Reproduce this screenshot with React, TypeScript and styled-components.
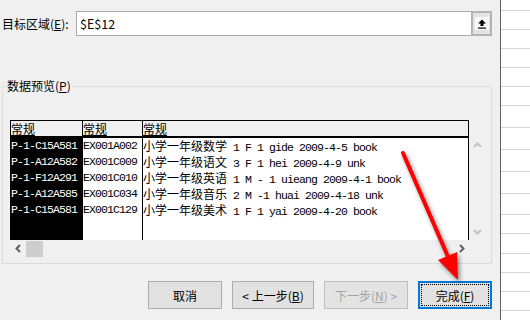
import React from 'react'
import styled, { createGlobalStyle } from 'styled-components'

const GlobalStyle = createGlobalStyle`
    html, body {
        margin: 0;
        padding: 0;
    }
    body {
        width: 530px;
        height: 320px;
        overflow: hidden;
        background: #f0f0f0;
        color: #000;
        font-family: "Noto Sans CJK SC", "Noto Sans", sans-serif;
        font-size: 12px;
    }
`

const Screen = styled.div`
    position: relative;
    display: flex;
    width: 530px;
    height: 320px;
    overflow: hidden;
`

const Dialog = styled.div`
    width: 501px;
    box-sizing: border-box;
    padding: 11px 8px 0 2px;
    display: flex;
    flex-direction: column;
    border-right: 1px solid #646464;
    background: #f0f0f0;
`

const InputRow = styled.div`
    display: flex;
    align-items: center;
    height: 25px;
`

const FieldLabel = styled.label`
    width: 74px;
    flex-shrink: 0;
    line-height: 25px;
    white-space: nowrap;
`

const Mn = styled.span`
    text-decoration: underline;
    text-underline-offset: 1px;
`

const FieldBox = styled.div`
    flex: 1;
    display: flex;
    height: 25px;
    box-sizing: border-box;
    border: 1px solid #a9a9a9;
    border-right: none;
    background: #fff;
`

const FieldValue = styled.div`
    flex: 1;
    padding-left: 3px;
    line-height: 23px;
    font-size: 12.5px;
`

const RefButton = styled.div`
    width: 21px;
    box-sizing: border-box;
    margin-top: -1px;
    height: 25px;
    border: 2px solid #b3b3b3;
    background: #e3e3e3;
    display: flex;
    align-items: center;
    justify-content: center;
`

const RefTile = styled.div`
    width: 14px;
    height: 13px;
    background: #fcfcfc;
    display: flex;
    align-items: center;
    justify-content: center;
`

const Group = styled.fieldset`
    margin: 43px 0 0 0;
    padding: 27px 5px 6px 7px;
    border: 1px solid #dcdcdc;
    min-width: 0;
`

const GroupLabel = styled.legend`
    padding: 0 1px;
    margin-left: -4px;
    line-height: 14px;
    font-size: 12px;
`

const Preview = styled.div`
    display: grid;
    grid-template-columns: 459px 17px;
    grid-template-rows: 120px 17px;
`

const Table = styled.div`
    display: flex;
    border-top: 1px solid #000;
    border-left: 1px solid #000;
    background: #fff;
    overflow: hidden;
`

const Column = styled.div<{ $w: number; $selected?: boolean }>`
    width: ${p => p.$w}px;
    flex-shrink: 0;
    box-sizing: border-box;
    display: flex;
    flex-direction: column;
    border-right: 1px solid #000;
    background: ${p => (p.$selected ? '#000' : '#fff')};
    color: ${p => (p.$selected ? '#fff' : '#000')};
    overflow: hidden;
`

const HeadCell = styled.div`
    height: 17px;
    box-sizing: border-box;
    border-bottom: 2px solid #000;
    background: #f0f0f0;
    color: #000;
    font-size: 12px;
    line-height: 15px;
    white-space: nowrap;
    text-decoration: underline;
    text-underline-offset: 1px;
`

const DataCell = styled.div`
    height: 16px;
    line-height: 16px;
    font-family: "Liberation Mono", monospace;
    font-size: 11.5px;
    letter-spacing: -0.9px;
    white-space: pre;
`

const Han = styled.span`
    font-family: "Noto Sans CJK SC", sans-serif;
    font-size: 12px;
    letter-spacing: 0;
`

const VScroll = styled.div`
    display: flex;
    flex-direction: column;
    justify-content: space-between;
    padding-top: 17px;
`

const HScroll = styled.div`
    display: flex;
    align-items: stretch;
    background: #f0f0f0;
`

const ScrollArrow = styled.div`
    width: 16px;
    height: 17px;
    display: flex;
    align-items: center;
    justify-content: center;
`

const Thumb = styled.div`
    width: 17px;
    margin-top: 1px;
    background: #cdcdcd;
`

const Track = styled.div`
    flex: 1;
`

const ButtonRow = styled.div`
    display: flex;
    justify-content: flex-end;
    gap: 10px;
    margin-top: 17px;
`

const Btn = styled.button<{ $w: number; $primary?: boolean }>`
    width: ${p => p.$w}px;
    height: 28px;
    box-sizing: border-box;
    padding: ${p => (p.$primary ? '1px' : '0')};
    margin: 0;
    display: flex;
    align-items: stretch;
    justify-content: center;
    background: #e1e1e1;
    border: ${p => (p.$primary ? '2px solid #0078d7' : '1px solid #adadad')};
    color: #000;
    font-family: "Noto Sans CJK SC", "Noto Sans", sans-serif;
    font-size: 12px;

    &:disabled {
        background: #e3e3e3;
        border-color: #bfbfbf;
        color: #a3a3a3;
    }
`

const BtnFace = styled.span<{ $focus?: boolean }>`
    flex: 1;
    display: flex;
    align-items: center;
    justify-content: center;
    border: 1px dotted ${p => (p.$focus ? '#000' : 'transparent')};
    white-space: pre;
`

const Sheet = styled.div`
    flex: 1;
    display: flex;
    flex-direction: column;
    background: #fff;
`

const SheetRow = styled.div<{ $h: number }>`
    height: ${p => p.$h}px;
    flex-shrink: 0;
    box-sizing: border-box;
    border-bottom: 1px solid #d4d4d4;
`

const ArrowLayer = styled.svg`
    position: absolute;
    left: 0;
    top: 0;
    pointer-events: none;
    filter: drop-shadow(2px 3px 2px rgba(0, 0, 0, 0.45));
`

const rows = [
    ['P-1-C15A581', 'EX001A002', '小学一年级数学 1 F 1 gide 2009-4-5 book'],
    ['P-1-A12A582', 'EX001C009', '小学一年级语文 3 F 1 hei 2009-4-9 unk'],
    ['P-1-F12A291', 'EX001C010', '小学一年级英语 1 M - 1 uieang 2009-4-1 book'],
    ['P-1-A12A585', 'EX001C034', '小学一年级音乐 2 M -1 huai 2009-4-18 unk'],
    ['P-1-C15A581', 'EX001C129', '小学一年级美术 1 F 1 yai 2009-4-20 book'],
]

const columnWidths = [72, 60, 326]

const sheetRows = [11, 19, 19, 19, 19, 19, 22, 22, 22, 22, 21, 19, 20, 19, 19, 19]

const Mixed = ({ text }: { text: string }) => (
    <>
        {text.split(/([\u4e00-\u9fff]+)/).map((part, i) =>
            /[\u4e00-\u9fff]/.test(part) ? <Han key={i}>{part}</Han> : part
        )}
    </>
)

const Chevron = ({ dir, color }: { dir: 'up' | 'down' | 'left' | 'right'; color: string }) => {
    const points = {
        up: '1,6 4.5,2.5 8,6',
        down: '1,3 4.5,6.5 8,3',
        left: '6,1 2.5,4.5 6,8',
        right: '3,1 6.5,4.5 3,8',
    }[dir]
    return (
        <svg width="9" height="9" viewBox="0 0 9 9">
            <polyline points={points} fill="none" stroke={color} strokeWidth="2" />
        </svg>
    )
}

const UploadIcon = () => (
    <svg width="10" height="10" viewBox="0 0 10 10">
        <path d="M5 0.5 L9 4.5 L6.5 4.5 L6.5 7 L3.5 7 L3.5 4.5 L1 4.5 Z" fill="#000" />
        <rect x="1" y="8.5" width="8" height="1.2" fill="#000" />
    </svg>
)

export default function App() {
    return (
        <Screen>
            <GlobalStyle />
            <Dialog>
                <InputRow>
                    <FieldLabel>目标区域(<Mn>E</Mn>):</FieldLabel>
                    <FieldBox>
                        <FieldValue>$E$12</FieldValue>
                        <RefButton>
                            <RefTile>
                                <UploadIcon />
                            </RefTile>
                        </RefButton>
                    </FieldBox>
                </InputRow>

                <Group>
                    <GroupLabel>数据预览(<Mn>P</Mn>)</GroupLabel>
                    <Preview>
                        <Table>
                            {columnWidths.map((w, c) => (
                                <Column key={c} $w={w} $selected={c === 0}>
                                    <HeadCell>常规</HeadCell>
                                    {rows.map((r, i) => (
                                        <DataCell key={i}>
                                            <Mixed text={r[c]} />
                                        </DataCell>
                                    ))}
                                </Column>
                            ))}
                        </Table>
                        <VScroll>
                            <ScrollArrow>
                                <Chevron dir="up" color="#c2c2c2" />
                            </ScrollArrow>
                            <ScrollArrow>
                                <Chevron dir="down" color="#c2c2c2" />
                            </ScrollArrow>
                        </VScroll>
                        <HScroll>
                            <ScrollArrow>
                                <Chevron dir="left" color="#606060" />
                            </ScrollArrow>
                            <Thumb />
                            <Track />
                            <ScrollArrow>
                                <Chevron dir="right" color="#606060" />
                            </ScrollArrow>
                        </HScroll>
                        <div />
                    </Preview>
                </Group>

                <ButtonRow>
                    <Btn $w={74}>
                        <BtnFace>取消</BtnFace>
                    </Btn>
                    <Btn $w={82}>
                        <BtnFace>{'< '}上一步(<Mn>B</Mn>)</BtnFace>
                    </Btn>
                    <Btn $w={84} disabled>
                        <BtnFace>下一步(<Mn>N</Mn>){' >'}</BtnFace>
                    </Btn>
                    <Btn $w={74} $primary>
                        <BtnFace $focus>完成(<Mn>F</Mn>)</BtnFace>
                    </Btn>
                </ButtonRow>
            </Dialog>

            <Sheet>
                {sheetRows.map((h, i) => (
                    <SheetRow key={i} $h={h} />
                ))}
            </Sheet>

            <ArrowLayer width="530" height="320" viewBox="0 0 530 320">
                <line x1="403" y1="153" x2="449" y2="259" stroke="#ff0000" strokeWidth="4" strokeLinecap="round" />
                <polygon points="458,280 438,260 457,252" fill="#ff0000" />
            </ArrowLayer>
        </Screen>
    )
}
